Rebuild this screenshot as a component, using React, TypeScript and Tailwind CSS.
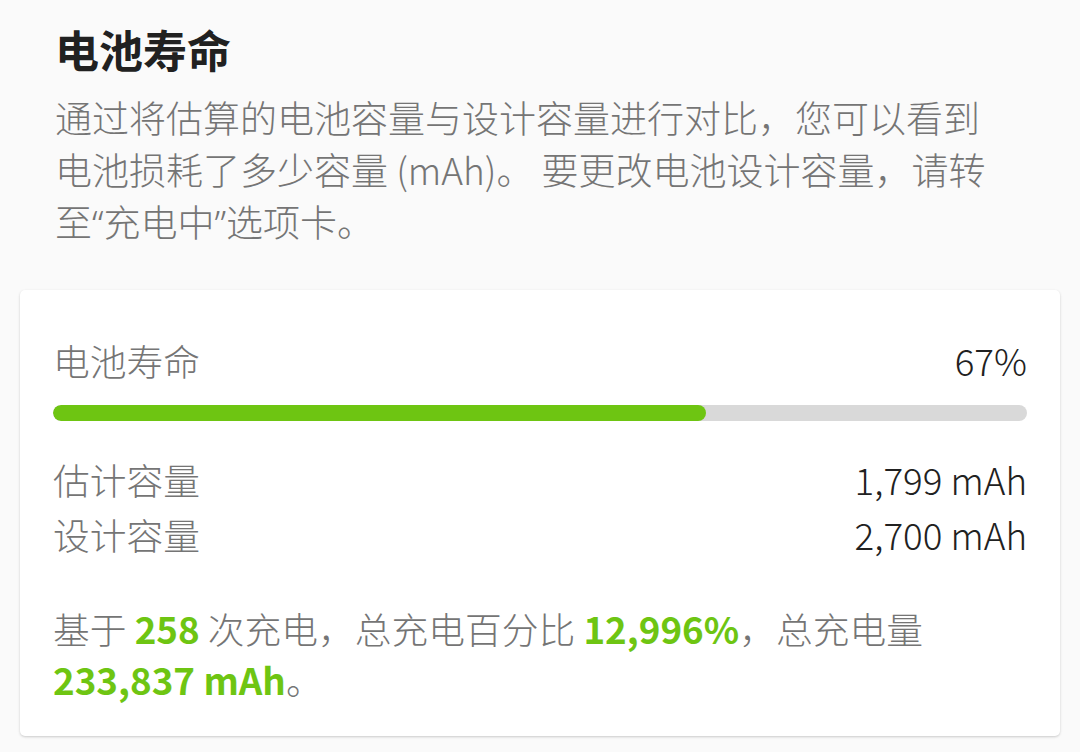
const font = "font-['Noto_Sans_CJK_SC','Noto_Sans',sans-serif]";

function StatRow({ label, value }: { label: string; value: string }) {
  return (
    <div className="flex h-[55px] items-center justify-between text-[36.75px] font-light leading-[55px]">
      <span className="text-[#757575]">{label}</span>
      <span className="text-[#212121]">{value}</span>
    </div>
  );
}

// Latin quotes, narrow like the Roboto ones on the device
function Q({ children }: { children: string }) {
  return <span className="font-['Noto_Sans',sans-serif]">{children}</span>;
}

export default function App() {
  const health = 67;

  return (
    <div className={`min-h-[752px] w-[1080px] bg-[#fafafa] ${font}`}>
      <div className="px-[55px] pt-[19px]">
        <h1 className="text-[44px] font-bold leading-[60px] text-[#212121]">电池寿命</h1>
        <p className="mt-[13px] max-w-[940px] text-[37px] font-light leading-[51.75px] text-[#757575]">
          通过将估算的电池容量与设计容量进行对比，您可以看到电池损耗了多少容量 (mAh)。 要更改电池设计容量，请转至<Q>“</Q>充电中<Q>”</Q>选项卡。
        </p>
      </div>

      <div className="mx-[20px] mt-[42px] rounded-[5px] bg-white px-[33px] pb-[31px] pt-[46px] shadow-[0_1px_3px_rgba(0,0,0,0.12),0_1px_2px_rgba(0,0,0,0.08)]">
        <div className="flex h-[48px] items-center justify-between text-[36.75px] font-light leading-[48px]">
          <span className="text-[#757575]">电池寿命</span>
          <span className="text-[#212121]">{health}%</span>
        </div>

        <div className="mt-[21px] h-[16px] w-full overflow-hidden rounded-full bg-[#d9d9d9]">
          <div className="h-full rounded-full bg-[#6ec512]" style={{ width: `${health}%` }} />
        </div>

        <div className="mt-[31px]">
          <StatRow label="估计容量" value="1,799 mAh" />
          <StatRow label="设计容量" value="2,700 mAh" />
        </div>

        <p className="mt-[41px] text-[36.75px] font-light leading-[51px] text-[#757575]">
          基于 <b className="font-bold text-[#6ec512]">258</b> 次充电，总充电百分比{" "}
          <b className="font-bold text-[#6ec512]">12,996%</b>，总充电量{" "}
          <b className="font-bold text-[#6ec512]">233,837 mAh</b>。
        </p>
      </div>
    </div>
  );
}
